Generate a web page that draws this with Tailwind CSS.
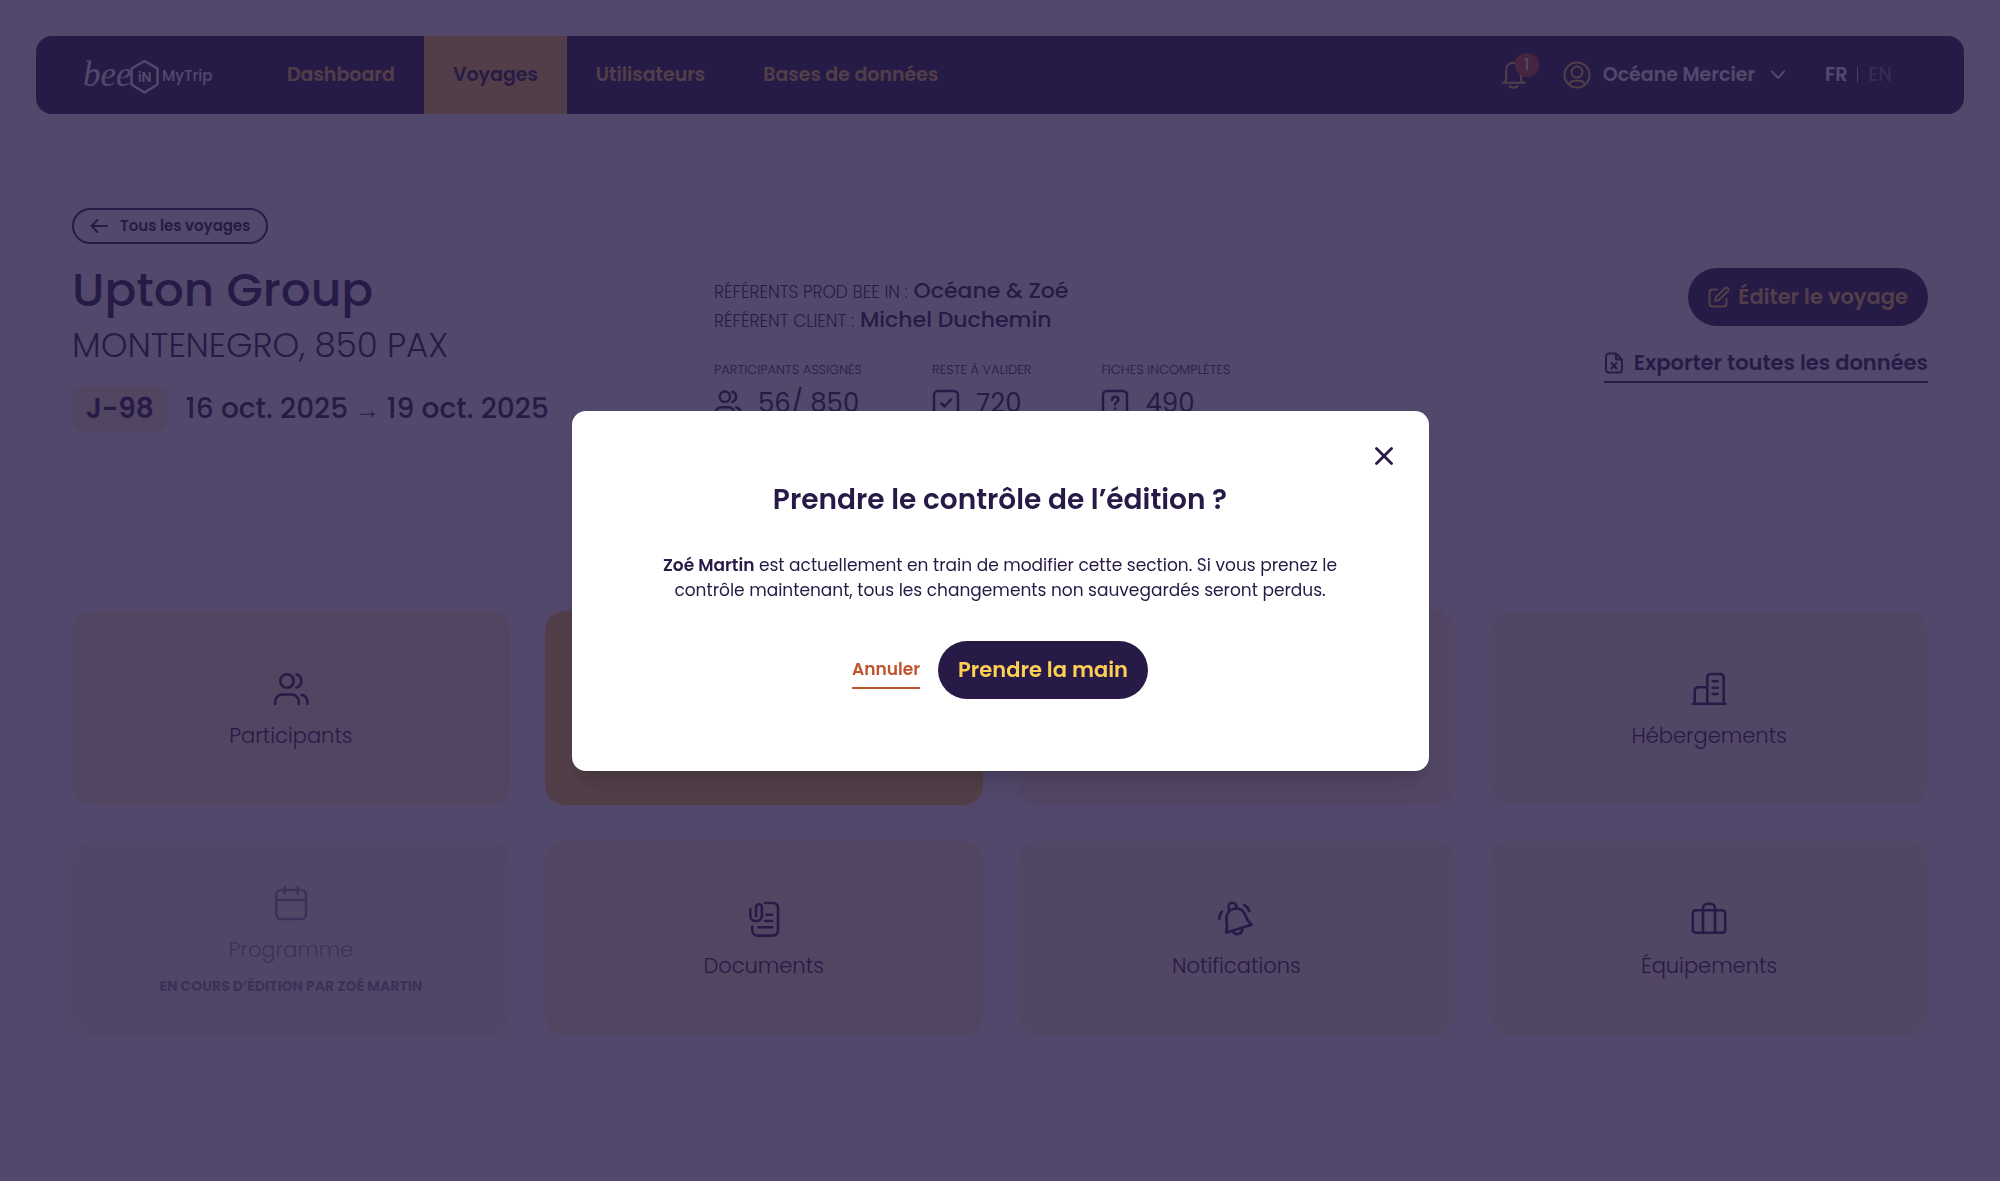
<!DOCTYPE html>
<html lang="fr">
<head>
  <meta charset="UTF-8" />
  <meta name="viewport" content="width=device-width, initial-scale=1.0"/>
  <title>Bee In MyTrip - Upton Group</title>
  <script src="https://cdn.jsdelivr.net/npm/@tailwindcss/browser@4"></script>
</head>
<body class="bg-white font-['Poppins','Inter',sans-serif] text-[#271a46]">

  <div class="min-h-screen px-9 pt-9">
    <!-- Navbar -->
    <header class="flex h-[78px] items-stretch overflow-hidden rounded-2xl bg-[#271a46] pl-12 pr-[72px] text-[19px] font-semibold text-[#ffce55]">
      <a href="#" class="mr-11 flex w-[130px] items-center text-white" aria-label="Bee In MyTrip">
        <svg class="h-[42px] w-[130px]" viewBox="0 0 130 42" fill="none" stroke="currentColor">
          <text x="-1" y="32" font-family="Liberation Serif" font-style="italic" font-weight="400" font-size="35" fill="currentColor" stroke="none">bee</text>
          <path d="M60.500 7l13 7.500v16l-13 8-13-8v-16z" stroke-width="2.500" stroke-linejoin="round"/>
          <text x="54" y="28" font-family="Inter" font-weight="700" font-size="13" fill="currentColor" stroke="none">iN</text>
          <text x="78" y="27" font-family="Poppins, Inter" font-weight="500" font-size="15" fill="currentColor" stroke="none">MyTrip</text>
        </svg>
      </a>
      <nav class="flex">
        <a href="#" class="flex items-center px-[29px]">Dashboard</a>
        <a href="#" class="flex items-center bg-[#ffce55] px-[29px] text-[#271a46]">Voyages</a>
        <a href="#" class="flex items-center px-[29px]">Utilisateurs</a>
        <a href="#" class="flex items-center px-[29px]">Bases de données</a>
      </nav>
      <div class="ml-auto flex items-center">
        <button class="relative mr-9" aria-label="Notifications">
          <svg class="h-7 w-[26px]" viewBox="0 0 26 28" fill="none" stroke="currentColor" stroke-width="2" stroke-linecap="round">
            <path d="M1.500 21.700h22.500M4 21.500c1-2 1.200-4 1.200-7V9.500c0-4.600 3-7.700 7.300-7.700s7.300 3.100 7.300 7.700v5c0 3 .4 5 1.600 7M8.500 25c1.800 2.200 6.200 2.200 8 0"/>
          </svg>
          <span class="absolute -top-2 left-3.5 flex size-6 items-center justify-center rounded-full bg-[#c9502f] text-base font-medium text-white">1</span>
        </button>
        <button class="flex items-center text-white">
          <svg class="mr-3 size-7 text-[#ffce55]" viewBox="0 0 28 28" fill="none" stroke="currentColor" stroke-width="2">
            <circle cx="14" cy="14" r="12.500"/>
            <circle cx="14" cy="11" r="5.500"/>
            <path d="M6.500 23.500c.5-2.600 2-3.800 4.500-3.800h6c2.500 0 4 1.200 4.500 3.800"/>
          </svg>
          Océane Mercier
          <svg class="ml-4 h-2.5 w-3.5" viewBox="0 0 14 10" fill="none" stroke="currentColor" stroke-width="2" stroke-linecap="round" stroke-linejoin="round"><path d="M1 1.500l6 6.500 6-6.500"/></svg>
        </button>
        <div class="ml-10 flex items-center gap-2.5 text-white">
          <a href="#">FR</a>
          <span class="h-4 w-px bg-white/80"></span>
          <a href="#" class="font-medium text-white/40">EN</a>
        </div>
      </div>
    </header>

    <main class="px-9 pb-20 pt-[94px]">
      <!-- Trip summary -->
      <a href="#" class="inline-flex h-9 items-center gap-3 rounded-full border-2 border-[#271a46] px-4 text-[15px] font-semibold">
        <svg class="h-4 w-[18px]" viewBox="0 0 18 16" fill="none" stroke="currentColor" stroke-width="2" stroke-linecap="round" stroke-linejoin="round"><path d="M17 8H1.500M7.500 2l-6 6 6 6"/></svg>
        Tous les voyages
      </a>

      <div class="mt-4 grid grid-cols-[642px_1fr_auto]">
        <div>
          <h1 class="text-[47px] leading-[60px] font-medium">Upton Group</h1>
          <p class="text-[34px] leading-[50px] font-light">MONTENEGRO, 850 PAX</p>
          <div class="mt-4 flex items-center gap-[18px] text-[28px] leading-[46px] font-medium">
            <span class="rounded-xl bg-[#fff0d3] px-3.5 font-semibold">J-98</span>
            <span>16 oct. 2025 <span class="font-['Liberation_Sans'] text-2xl leading-none font-normal">→</span> 19 oct. 2025</span>
          </div>
        </div>

        <div class="pt-4">
          <p class="text-[22px] leading-[29px] font-medium"><span class="text-[17px] leading-none font-light">RÉFÉRENTS PROD BEE IN :</span> Océane &amp; Zoé</p>
          <p class="text-[22px] leading-[29px] font-medium"><span class="text-[17px] leading-none font-light">RÉFÉRENT CLIENT :</span> Michel Duchemin</p>
          <div class="mt-7 flex gap-[70px] text-[13px] leading-4 font-light">
            <div>
              <p>PARTICIPANTS ASSIGNÉS</p>
              <p class="mt-2 flex items-center gap-4 text-[26px] leading-[34px] font-normal">
                <svg class="size-7" viewBox="0 0 36 36" fill="none" stroke="currentColor" stroke-width="3.200" stroke-linecap="round">
                  <circle cx="14" cy="10" r="6.700"/>
                  <path d="M23.500 3.500c3 .8 4.800 3.200 4.800 6.500s-1.800 5.700-4.800 6.500M2.200 33v-2.500a7 7 0 0 1 7-7h9.600a7 7 0 0 1 7 7V33M28.500 23.800c3.600.8 5.800 3.200 5.800 6.800V33"/>
                </svg>
                56/ 850
              </p>
            </div>
            <div>
              <p>RESTE À VALIDER</p>
              <p class="mt-2 flex items-center gap-4 text-[26px] leading-[34px] font-normal">
                <svg class="size-7" viewBox="0 0 28 28" fill="none" stroke="currentColor" stroke-width="2.500" stroke-linecap="round" stroke-linejoin="round"><rect x="2" y="2" width="24" height="24" rx="4"/><path d="M9.500 14.500l3 3 6.500-7"/></svg>
                720
              </p>
            </div>
            <div>
              <p>FICHES INCOMPLÈTES</p>
              <p class="mt-2 flex items-center gap-4 text-[26px] leading-[34px] font-normal">
                <svg class="size-7" viewBox="0 0 28 28" fill="none" stroke="currentColor" stroke-width="2.500" stroke-linecap="round"><rect x="2" y="2" width="24" height="24" rx="4"/><path d="M11 11c0-4.500 6.500-4 6.500-.5 0 2.500-3.300 2.500-3.300 5M14.200 19.500v.2"/></svg>
                490
              </p>
            </div>
          </div>
        </div>

        <div class="flex flex-col items-end pt-2">
          <button class="flex h-[58px] items-center gap-2 rounded-full bg-[#271a46] px-5 text-[21px] font-semibold text-[#ffce55]">
            <svg class="size-[22px]" viewBox="0 0 22 22" fill="none" stroke="currentColor" stroke-width="2" stroke-linecap="round" stroke-linejoin="round"><path d="M9 3.500H4.500a3 3 0 0 0-3 3v11a3 3 0 0 0 3 3h11a3 3 0 0 0 3-3V13M17 2.200a2 2 0 0 1 2.900 2.900L11 14l-4 1 1-4z"/></svg>
            Éditer le voyage
          </button>
          <a href="#" class="mt-4 flex h-[41px] items-center gap-2.5 border-b-2 border-[#271a46] pt-0.5 text-[21px] font-semibold">
            <svg class="h-[22px] w-5" viewBox="0 0 20 22" fill="none" stroke="currentColor" stroke-width="2" stroke-linecap="round" stroke-linejoin="round"><path d="M12 1.500H5a3 3 0 0 0-3 3v13a3 3 0 0 0 3 3h10a3 3 0 0 0 3-3V7.500zM12 1.500v6h6M7.500 11l5 5.500M12.500 11l-5 5.500"/></svg>
            Exporter toutes les données
          </a>
        </div>
      </div>

      <!-- Sections -->
      <div class="mt-[179px] grid grid-cols-4 gap-x-[35px] gap-y-9 text-[21px] leading-[34px] font-light">
        <a href="#" class="flex h-[194px] flex-col items-center justify-center gap-3 rounded-[20px] bg-[#fff0cd] pt-2">
          <svg class="size-9" viewBox="0 0 36 36" fill="none" stroke="currentColor" stroke-width="2.600" stroke-linecap="round">
            <circle cx="14" cy="10" r="6.700"/>
            <path d="M23.500 3.500c3 .8 4.800 3.200 4.800 6.500s-1.800 5.700-4.800 6.500M2.200 33v-2.500a7 7 0 0 1 7-7h9.600a7 7 0 0 1 7 7V33M28.500 23.800c3.600.8 5.800 3.200 5.800 6.800V33"/>
          </svg>
          Participants
        </a>
        <div class="h-[194px] rounded-[20px] bg-[#ffce55]"></div>
        <div class="h-[194px] rounded-[20px] bg-[#fff3dc]"></div>
        <a href="#" class="flex h-[194px] flex-col items-center justify-center gap-3 rounded-[20px] bg-[#fbf3d8] pt-2">
          <svg class="size-9" viewBox="0 0 36 36" fill="none" stroke="currentColor" stroke-width="2.600" stroke-linecap="round" stroke-linejoin="round">
            <path d="M1.800 32.700h32.500M16.300 32.700V6.500A3.500 3.500 0 0 1 19.800 3h9.400a3.500 3.500 0 0 1 3.500 3.500v26.200M3.700 32.700V19.800a3.500 3.500 0 0 1 3.500-3.500h9M21.800 10.300h5M21.800 16.700h5M21.800 23h5"/>
          </svg>
          Hébergements
        </a>
        <a href="#" class="flex h-[194px] flex-col items-center justify-center rounded-[20px] bg-[#ffe9d3] pt-2.5 opacity-50">
          <svg class="mb-3 size-9" viewBox="0 0 36 36" fill="none" stroke="currentColor" stroke-width="2.600" stroke-linecap="round">
            <rect x="3.200" y="5" width="29.800" height="29" rx="5"/>
            <path d="M3.200 15H33M11.700 1.800v7M24.700 1.800v7"/>
          </svg>
          Programme
          <span class="mt-1 text-sm leading-[30px] font-bold">EN COURS D’ÉDITION PAR ZOÉ MARTIN</span>
        </a>
        <a href="#" class="flex h-[194px] flex-col items-center justify-center gap-3 rounded-[20px] bg-[#fff0cd] pt-2">
          <svg class="size-9" viewBox="0 0 36 36" fill="none" stroke="currentColor" stroke-width="2.600" stroke-linecap="round" stroke-linejoin="round">
            <path d="M19 2h8a5 5 0 0 1 5 5v22.600a5 5 0 0 1-5 5H11.300a5 5 0 0 1-5-5V25.500M20.500 13.700h5.500M19 20h7M12.500 26.300H26"/>
            <path d="M4.300 8v6.500c0 3.500 2.400 5.700 5.800 5.700s5.800-2.200 5.800-5.700v-8c0-2-1.200-3.300-2.900-3.300s-2.900 1.300-2.900 3.300V15"/>
          </svg>
          Documents
        </a>
        <a href="#" class="flex h-[194px] flex-col items-center justify-center gap-3 rounded-[20px] bg-[#fbf3d8] pt-2">
          <svg class="size-9" viewBox="0 0 36 36" fill="none" stroke="currentColor" stroke-width="2.600" stroke-linecap="round" stroke-linejoin="round">
            <path d="M8 31.700c1.400-4 1.200-7.200.6-11.400C7.500 13.500 10.800 9 16 7.800S25.500 9 27.400 14.500c1.400 4 3 6.600 6.300 9.200z"/>
            <path d="M10.800 8.300C9.500 3.800 12 1.700 14.300 1.700s4.700 1.800 4.200 5.400M15 30c1.500 4.800 9 4.200 9.500-2.700M4 10.700c-1.800 2-2.700 4.600-2.700 7.300M26 4c2.600 1.200 4.300 3.200 5.300 6"/>
          </svg>
          Notifications
        </a>
        <a href="#" class="flex h-[194px] flex-col items-center justify-center gap-3 rounded-[20px] bg-[#fbf3d8] pt-2">
          <svg class="size-9" viewBox="0 0 36 36" fill="none" stroke="currentColor" stroke-width="2.600" stroke-linecap="round">
            <rect x="1.800" y="9.300" width="32.400" height="22.400" rx="3"/>
            <path d="M12 31.700V7.500c0-3 2-4.700 4.500-4.700h3c2.500 0 4.500 1.700 4.500 4.700v24.200"/>
          </svg>
          Équipements
        </a>
      </div>
    </main>
  </div>

  <!-- Take control modal -->
  <div class="fixed inset-0 flex items-center justify-center bg-[#271a46]/80">
    <div role="dialog" aria-modal="true" aria-labelledby="modalTitle" class="relative w-full max-w-[857px] rounded-[14px] bg-white px-20 pb-[72px] pt-[68px] text-center shadow-xl">
      <button class="absolute right-9 top-9 flex" aria-label="Fermer">
        <svg class="size-[18px]" viewBox="0 0 18 18" fill="none" stroke="currentColor" stroke-width="2.800" stroke-linecap="round"><path d="M1.500 1.500l15 15M16.500 1.500l-15 15"/></svg>
      </button>
      <h2 id="modalTitle" class="text-[28px] leading-[42px] font-semibold">Prendre le contrôle de l’édition ?</h2>
      <p class="mt-8 text-[17px] leading-[25px]"><strong class="font-semibold">Zoé Martin</strong> est actuellement en train de modifier cette section. Si vous prenez le contrôle maintenant, tous les changements non sauvegardés seront perdus.</p>
      <div class="mt-[38px] flex items-center justify-center gap-[18px]">
        <button class="h-[38px] border-b-2 border-[#c0542f] pt-0.5 text-[17px] font-semibold text-[#c0542f]">Annuler</button>
        <button class="h-[58px] rounded-full bg-[#271a46] px-5 text-[21px] font-semibold text-[#ffce55]">Prendre la main</button>
      </div>
    </div>
  </div>

</body>
</html>
